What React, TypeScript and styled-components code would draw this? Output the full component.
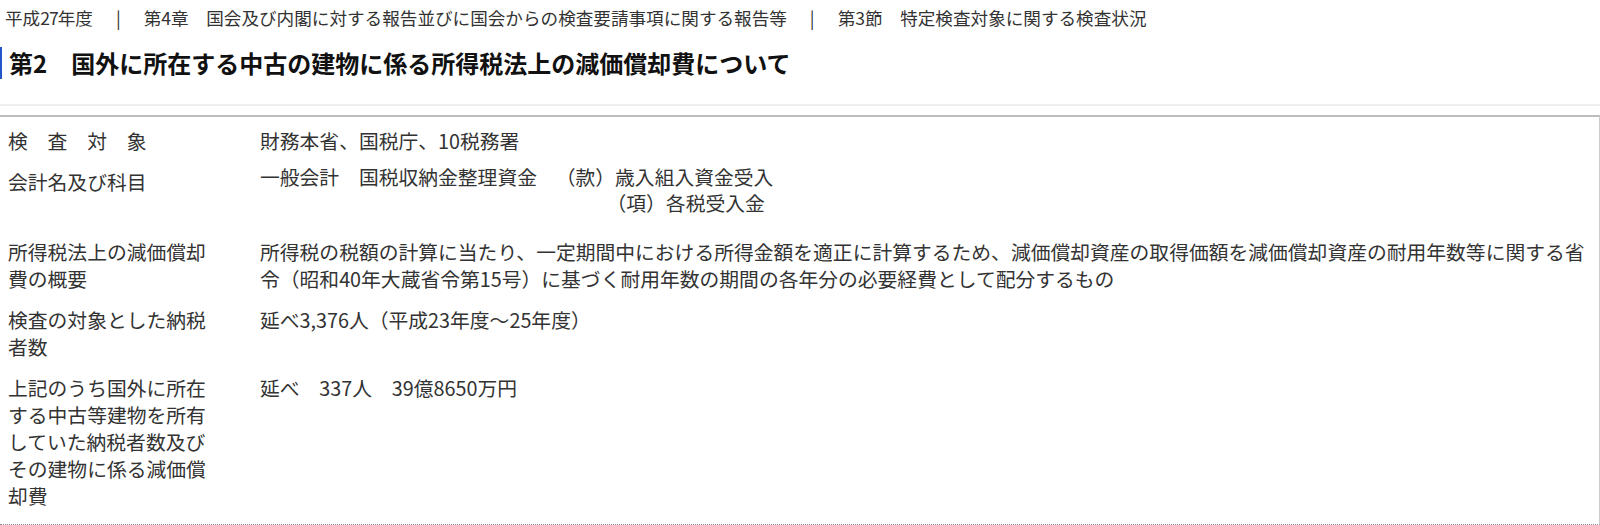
import React from 'react';
import styled, { createGlobalStyle } from 'styled-components';

const GlobalStyle = createGlobalStyle`
  html, body {
    margin: 0;
    padding: 0;
    background: #ffffff;
  }
  body {
    font-family: "Noto Sans CJK JP", "Noto Sans", sans-serif;
    color: #333333;
  }
`;

const Page = styled.div`
  width: 1600px;
  height: 525px;
  overflow: hidden;
`;

const Breadcrumb = styled.div`
  padding: 6px 0 0 5px;
  font-size: 17.6px;
  line-height: 24px;
  color: #333333;
  white-space: nowrap;
`;

const Num = styled.span`
  letter-spacing: -1px;
`;

const Sep = styled.span`
  display: inline-block;
  margin: 0 23px;
`;

const Heading = styled.h2`
  margin: 17px 0 0;
  height: 32px;
  border-left: 2px solid #2356c8;
  padding-left: 7px;
  font-size: 24px;
  line-height: 32px;
  font-weight: 700;
  color: #111111;
  white-space: nowrap;
`;

const Divider = styled.div`
  margin-top: 25px;
  height: 2px;
  background: #eeeeee;
`;

const Table = styled.div`
  margin-top: 9px;
  border-top: 2px solid #bdbdbd;
  border-right: 1px solid #cccccc;
  border-bottom: 1px dotted #8a8a8a;
  padding: 3px 0 8px;
  font-size: 19.8px;
  line-height: 27px;
  color: #333333;
`;

const Row = styled.div<{ $extra?: number }>`
  display: grid;
  grid-template-columns: 212px 1fr;
  column-gap: 40px;
  padding: 7px 8px ${(p) => 7 + (p.$extra ?? 0)}px 8px;
`;

const Label = styled.div`
  word-break: break-all;
`;

const Value = styled.div``;

const AccountValue = styled.div`
  line-height: 26px;
  margin-top: -4px;
`;

const AccountLine = styled.div<{ $indent?: number }>`
  padding-left: ${(p) => p.$indent ?? 0}em;
  white-space: nowrap;
`;

const Item = styled.span`
  margin-left: 0.45em;
`;

export default function App() {
  return (
    <Page>
      <GlobalStyle />
      <Breadcrumb>
        平成<Num>27</Num>年度<Sep>|</Sep>第4章　国会及び内閣に対する報告並びに国会からの検査要請事項に関する報告等
        <Sep>|</Sep>第3節　特定検査対象に関する検査状況
      </Breadcrumb>
      <Heading>第2　国外に所在する中古の建物に係る所得税法上の減価償却費について</Heading>
      <Divider />
      <Table>
        <Row>
          <Label>検　査　対　象</Label>
          <Value>財務本省、国税庁、10税務署</Value>
        </Row>
        <Row $extra={8}>
          <Label>会計名及び科目</Label>
          <AccountValue>
            <AccountLine>
              一般会計　国税収納金整理資金　<Item>（款）歳入組入資金受入</Item>
            </AccountLine>
            <AccountLine $indent={17.5}>（項）各税受入金</AccountLine>
          </AccountValue>
        </Row>
        <Row>
          <Label>所得税法上の減価償却費の概要</Label>
          <Value>
            所得税の税額の計算に当たり、一定期間中における所得金額を適正に計算するため、減価償却資産の取得価額を減価償却資産の耐用年数等に関する省令（昭和40年大蔵省令第15号）に基づく耐用年数の期間の各年分の必要経費として配分するもの
          </Value>
        </Row>
        <Row>
          <Label>検査の対象とした納税者数</Label>
          <Value>延べ3,376人（平成23年度～25年度）</Value>
        </Row>
        <Row>
          <Label>上記のうち国外に所在する中古等建物を所有していた納税者数及びその建物に係る減価償却費</Label>
          <Value>延べ　337人　39億8650万円</Value>
        </Row>
      </Table>
    </Page>
  );
}
